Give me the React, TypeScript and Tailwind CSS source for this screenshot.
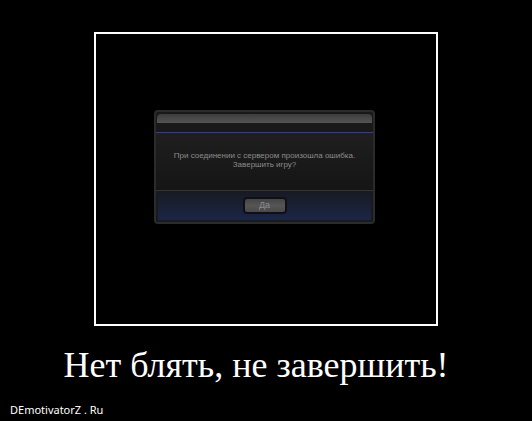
interface ErrorDialogProps {
  lines: string[];
  confirmLabel: string;
}

function ErrorDialog({ lines, confirmLabel }: ErrorDialogProps) {
  return (
    <div
      role="alertdialog"
      aria-labelledby="error-message"
      className="w-[221px] rounded border-2 border-[#2b2b2b] bg-[#191919] font-['Liberation_Sans',Arial,sans-serif] text-[8px] leading-[9px] text-[#8c8c8c]"
    >
      <div className="h-[21px] border-b border-[#3a4078] px-px pt-0.5">
        <div className="h-[9px] rounded-t-sm bg-linear-to-b from-[#3c3c3c] to-[#555555]" />
      </div>

      <div className="h-[58px] border-b border-[#343434] bg-linear-to-b from-[#1f1f1f] to-[#151515] pt-[18px] text-center">
        <p id="error-message">
          {lines.map((line) => (
            <span key={line} className="block">
              {line}
            </span>
          ))}
        </p>
      </div>

      <div className="bg-[#191a20] px-0.5 pb-0.5">
        <div className="flex h-[29px] items-center justify-center bg-linear-to-b from-[#181a22] to-[#1a2648]">
          <button
            type="button"
            className="h-[17px] w-11 rounded border-2 border-[#101014] bg-linear-to-b from-[#454545] via-[#555555] to-[#4a4a4a] text-[9px] text-[#8c8c8c]"
          >
            {confirmLabel}
          </button>
        </div>
      </div>
    </div>
  );
}

export default function App() {
  return (
    <main className="min-h-screen bg-black text-white">
      <div className="px-[94px] pt-8">
        <div className="flex h-[294px] justify-center border-2 border-white pt-[76px] pr-[3px]">
          <div>
            <ErrorDialog
              lines={["При соединении с сервером произошла ошибка.", "Завершить игру?"]}
              confirmLabel="Да"
            />
          </div>
        </div>
      </div>

      <h1 className="mt-4 pr-5 text-center font-['Liberation_Serif','Times_New_Roman',serif] text-[36px] leading-[46px] whitespace-nowrap">
        Нет блять, не завершить!
      </h1>

      <footer className="mt-3 px-2.5 font-['Noto_Sans',sans-serif] text-[11px] leading-5">
        DEmotivatorZ . Ru
      </footer>
    </main>
  );
}
